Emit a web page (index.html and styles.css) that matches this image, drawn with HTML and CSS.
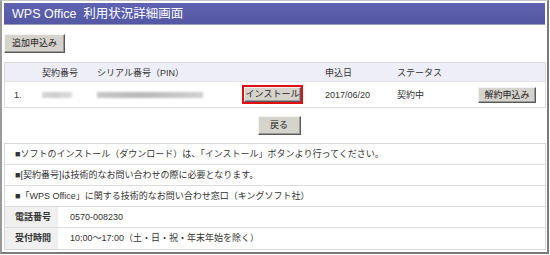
FILE: index.html
```html
<!DOCTYPE html>
<html lang="ja">
<head>
<meta charset="utf-8">
<link rel="stylesheet" href="styles.css">
</head>
<body>
<div class="frame">
  <div class="title">WPS Office&nbsp; 利用状況詳細画面</div>
  <div class="toolbar"><button class="btn add">追加申込み</button></div>
  <div class="table">
    <div class="row head">
      <span></span>
      <span>契約番号</span>
      <span>シリアル番号（PIN）</span>
      <span></span>
      <span>申込日</span>
      <span>ステータス</span>
      <span></span>
    </div>
    <div class="row body">
      <span class="no">1.</span>
      <span><i class="mask m1"></i></span>
      <span><i class="mask m2"></i></span>
      <span><span class="hl"><button class="btn inst">インストール</button></span></span>
      <span>2017/06/20</span>
      <span>契約中</span>
      <span><button class="btn cancel">解約申込み</button></span>
    </div>
  </div>
  <div class="back"><button class="btn backbtn">戻る</button></div>
  <div class="info">
    <div class="line">■ソフトのインストール（ダウンロード）は、「インストール」ボタンより行ってください。</div>
    <div class="line">■[契約番号]は技術的なお問い合わせの際に必要となります。</div>
    <div class="line">■「WPS Office」に関する技術的なお問い合わせ窓口（キングソフト社）</div>
    <div class="line kv"><span class="label">電話番号</span><span class="val">0570-008230</span></div>
    <div class="line kv"><span class="label">受付時間</span><span class="val">10:00～17:00（土・日・祝・年末年始を除く）</span></div>
  </div>
</div>
</body>
</html>
```

FILE: styles.css
```css
* { box-sizing: border-box; }
html, body { margin: 0; padding: 0; background: #fff; }
body {
  font-family: "Liberation Sans", "Noto Sans CJK JP", sans-serif;
  font-size: 9px;
  color: #333;
  width: 550px;
  height: 255px;
  overflow: hidden;
}
.frame {
  width: 549px;
  height: 254px;
  border-top: 1px solid #c8c8c8;
  border-left: 2px solid #9a9a9a;
  border-right: 2px solid #7a7a7a;
  border-bottom: 2px solid #7a7a7a;
  padding: 2px 2px 0 2px;
}
.title {
  height: 22px;
  background: linear-gradient(#5e62b0, #5458a4);
  color: #fff;
  font-size: 12.5px;
  line-height: 22px;
  padding-left: 8px;
  border-bottom: 1px solid #9a9cc8;
}
.toolbar { padding-top: 9px; height: 37px; }
.btn {
  font-family: "Liberation Sans", "Noto Sans CJK JP", sans-serif;
  font-size: 9px;
  color: #222;
  background: #d6d3cc;
  border: 1px solid;
  border-color: #f4f4f4 #5a5a5a #5a5a5a #f4f4f4;
  box-shadow: inset -1px -1px 0 #9a9a9a;
  padding: 0;
  margin: 0;
  height: 19px;
  line-height: 17px;
  display: inline-flex;
  align-items: center;
  justify-content: center;
}
.add { width: 61px; }
.table {
  border: 1px solid #dcdcdc;
  width: 542px;
}
.row {
  display: grid;
  grid-template-columns: 28px 55px 146px 82px 72px 81px 1fr;
  padding-left: 9px;
  align-items: center;
}
.row.head {
  height: 19px;
  background: #eeeef8;
  border-bottom: 1px solid #e2e2ea;
}
.row.body { height: 25px; }
.mask {
  display: block;
  height: 6px;
  background: linear-gradient(90deg, #c8c8c8, #b8b8b8 40%, #d0d0d0);
  filter: blur(1px);
}
.m1 { width: 30px; opacity: .7; }
.m2 { width: 106px; }
.hl {
  display: inline-block;
  border: 2px solid #e01010;
  margin-left: -1px;
}
.hl .btn { display: flex; }
.inst { width: 57px; height: 15px; line-height: 13px; }
.cancel { width: 58px; height: 16px; line-height: 14px; }
.back {
  display: flex;
  justify-content: center;
  padding: 8px 0 8px;
  height: 35px;
}
.backbtn { width: 43px; margin-left: 9px; }
.info {
  border: 1px solid #d8d8d8;
  width: 542px;
}
.line {
  height: 21px;
  line-height: 20px;
  border-bottom: 1px solid #dcdcdc;
  padding-left: 10px;
}
.line:last-child { border-bottom: none; }
.kv { display: flex; padding-left: 0; }
.label {
  width: 53px;
  background: #f0f0f0;
  font-weight: bold;
  padding-left: 10px;
}
.val { padding-left: 12px; }
```
